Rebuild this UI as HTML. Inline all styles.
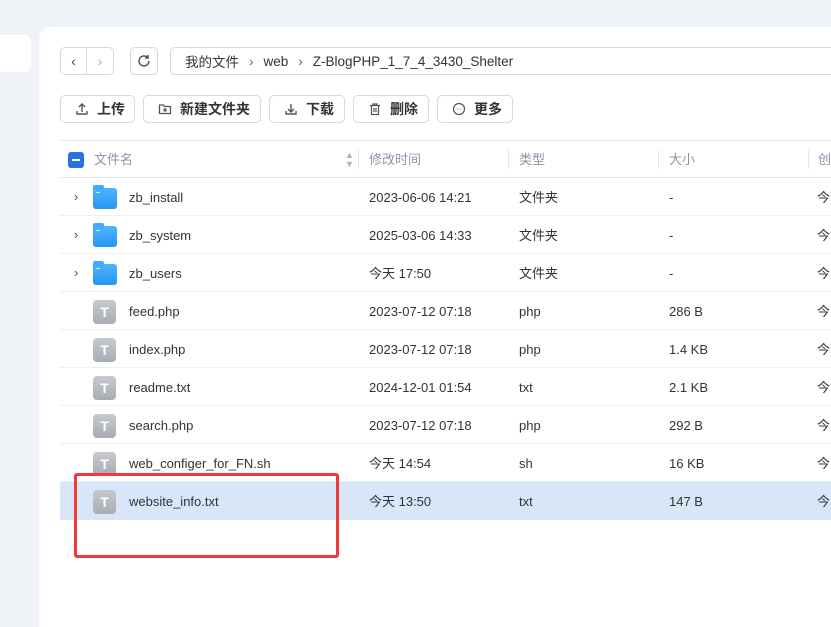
<!DOCTYPE html>
<html><head><meta charset="utf-8"><style>
*{box-sizing:border-box;margin:0;padding:0}
body{width:831px;height:617px;background:#eff2f7;font-family:"Liberation Sans","Noto Sans CJK SC",sans-serif;position:relative;overflow:hidden;color:#222}
.side{position:absolute;left:0;top:35px;width:31px;height:37px;background:#fff;border-radius:0 6px 6px 0}
.panel{position:absolute;left:39px;top:27px;width:800px;height:600px;background:#fff;border-radius:12px 0 0 0}
.btn{position:absolute;border:1px solid #d3d9e3;border-radius:5px;background:#fff;font-size:14px;display:flex;align-items:center;color:#333}
.tb{height:28px;top:95px;font-weight:bold;padding-left:14px}
.tb svg{margin-right:8px}
.hdr{position:absolute;left:60px;top:140px;width:771px;height:38px;border-top:1px solid #e3e8f0;border-bottom:1px solid #e3e8f0;font-size:13px;color:#8a96a8}
.row{position:absolute;left:60px;width:771px;height:38px;border-bottom:1px solid #eceff4;font-size:13px;color:#333}
.c{position:absolute;top:0;line-height:39px;white-space:nowrap}
.sep{position:absolute;top:9px;width:1px;height:19px;background:#e3e8f0}
.fold{position:absolute;left:33px;top:10px;width:24px;height:21px;background:linear-gradient(#4fb4ff,#2496f5);border-radius:3px}
.fold:before{content:"";position:absolute;left:0;top:-3px;width:11px;height:5px;background:#44aaff;border-radius:2px 2px 0 0}
.fold:after{content:"";position:absolute;left:3px;top:4px;width:4px;height:1px;background:#cfeaff}
.file{position:absolute;left:33px;top:8px;width:23px;height:24px;background:linear-gradient(#c7c9cf,#a9acb4);border-radius:4px;color:#fff;font-weight:bold;font-size:14px;text-align:center;line-height:24px}
.arr{position:absolute;left:14px;top:0;line-height:38px;color:#555;font-size:13px}
</style></head><body>
<div class="side"></div>
<div class="panel"></div>
<div class="btn" style="left:60px;top:47px;width:54px;height:28px;">
 <span style="width:26px;text-align:center;color:#444;border-right:1px solid #d3d9e3;height:26px;line-height:26px">‹</span><span style="width:26px;text-align:center;color:#aab">›</span></div>
<div class="btn" style="left:130px;top:47px;width:28px;height:28px;justify-content:center">
<svg width="16" height="16" viewBox="0 0 16 16"><path d="M13 8a5 5 0 1 1-1.5-3.6M12 2v3h-3" fill="none" stroke="#555" stroke-width="1.5"/></svg></div>
<div class="btn" style="left:170px;top:47px;width:680px;height:28px;padding-left:14px;font-size:13.5px">我的文件 <span style="margin:0 10px;color:#666">›</span> web <span style="margin:0 10px;color:#666">›</span> Z-BlogPHP_1_7_4_3430_Shelter</div>

<div class="btn tb" style="left:60px;width:75px"><svg width="14" height="14" viewBox="0 0 14 14"><path d="M7 10V2M4 5l3-3 3 3M2 9v3h10V9" fill="none" stroke="#555" stroke-width="1.4"/></svg>上传</div>
<div class="btn tb" style="left:143px;width:118px"><svg width="14" height="14" viewBox="0 0 14 14"><path d="M1.5 3h4l1 1.5h6v7h-11z M7 6v4M5 8h4" fill="none" stroke="#555" stroke-width="1.3"/></svg>新建文件夹</div>
<div class="btn tb" style="left:269px;width:76px"><svg width="14" height="14" viewBox="0 0 14 14"><path d="M7 2v8M4 7l3 3 3-3M2 9v3h10V9" fill="none" stroke="#555" stroke-width="1.4"/></svg>下载</div>
<div class="btn tb" style="left:353px;width:76px"><svg width="14" height="14" viewBox="0 0 14 14"><path d="M2 3.5h10M5 3.5V2h4v1.5M3.5 3.5v9h7v-9M6 6v4M8 6v4" fill="none" stroke="#555" stroke-width="1.2"/></svg>删除</div>
<div class="btn tb" style="left:437px;width:76px"><svg width="14" height="14" viewBox="0 0 14 14"><circle cx="7" cy="7" r="5.5" fill="none" stroke="#555" stroke-width="1.2"/><path d="M4.5 7h5" stroke="#aaa" stroke-width="1.2" stroke-dasharray="1 1"/></svg>更多</div>

<div class="hdr">
 <div style="position:absolute;left:8px;top:11px;width:16px;height:16px;background:#2673e0;border-radius:3px"><div style="position:absolute;left:4px;top:7px;width:8px;height:2px;background:#fff"></div></div>
 <div class="c" style="left:34px;line-height:37px">文件名</div>
 <div class="c" style="left:285px;font-size:9px;line-height:9px;top:10px;color:#a8b2c2">▲<br>▼</div>
 <div class="sep" style="left:298px"></div>
 <div class="c" style="left:309px;line-height:37px">修改时间</div>
 <div class="sep" style="left:448px"></div>
 <div class="c" style="left:459px;line-height:37px">类型</div>
 <div class="sep" style="left:598px"></div>
 <div class="c" style="left:609px;line-height:37px">大小</div>
 <div class="sep" style="left:748px"></div>
 <div class="c" style="left:758px;line-height:37px">创</div>
</div>

<div class="row" style="top:178px"><span class="arr">›</span><div class="fold"></div><div class="c" style="left:69px">zb_install</div><div class="c" style="left:309px">2023-06-06 14:21</div><div class="c" style="left:459px">文件夹</div><div class="c" style="left:609px">-</div><div class="c" style="left:757px">今</div></div>
<div class="row" style="top:216px"><span class="arr">›</span><div class="fold"></div><div class="c" style="left:69px">zb_system</div><div class="c" style="left:309px">2025-03-06 14:33</div><div class="c" style="left:459px">文件夹</div><div class="c" style="left:609px">-</div><div class="c" style="left:757px">今</div></div>
<div class="row" style="top:254px"><span class="arr">›</span><div class="fold"></div><div class="c" style="left:69px">zb_users</div><div class="c" style="left:309px">今天 17:50</div><div class="c" style="left:459px">文件夹</div><div class="c" style="left:609px">-</div><div class="c" style="left:757px">今</div></div>
<div class="row" style="top:292px"><div class="file">T</div><div class="c" style="left:69px">feed.php</div><div class="c" style="left:309px">2023-07-12 07:18</div><div class="c" style="left:459px">php</div><div class="c" style="left:609px">286 B</div><div class="c" style="left:757px">今</div></div>
<div class="row" style="top:330px"><div class="file">T</div><div class="c" style="left:69px">index.php</div><div class="c" style="left:309px">2023-07-12 07:18</div><div class="c" style="left:459px">php</div><div class="c" style="left:609px">1.4 KB</div><div class="c" style="left:757px">今</div></div>
<div class="row" style="top:368px"><div class="file">T</div><div class="c" style="left:69px">readme.txt</div><div class="c" style="left:309px">2024-12-01 01:54</div><div class="c" style="left:459px">txt</div><div class="c" style="left:609px">2.1 KB</div><div class="c" style="left:757px">今</div></div>
<div class="row" style="top:406px"><div class="file">T</div><div class="c" style="left:69px">search.php</div><div class="c" style="left:309px">2023-07-12 07:18</div><div class="c" style="left:459px">php</div><div class="c" style="left:609px">292 B</div><div class="c" style="left:757px">今</div></div>
<div class="row" style="top:444px"><div class="file">T</div><div class="c" style="left:69px">web_configer_for_FN.sh</div><div class="c" style="left:309px">今天 14:54</div><div class="c" style="left:459px">sh</div><div class="c" style="left:609px">16 KB</div><div class="c" style="left:757px">今</div></div>
<div class="row" style="top:482px;background:#d9e6f8;border-bottom:none"><div class="file">T</div><div class="c" style="left:69px">website_info.txt</div><div class="c" style="left:309px">今天 13:50</div><div class="c" style="left:459px">txt</div><div class="c" style="left:609px">147 B</div><div class="c" style="left:757px">今</div></div>

<div style="position:absolute;left:74px;top:473px;width:265px;height:85px;border:3px solid #f03a3a;border-radius:3px"></div>
</body></html>
